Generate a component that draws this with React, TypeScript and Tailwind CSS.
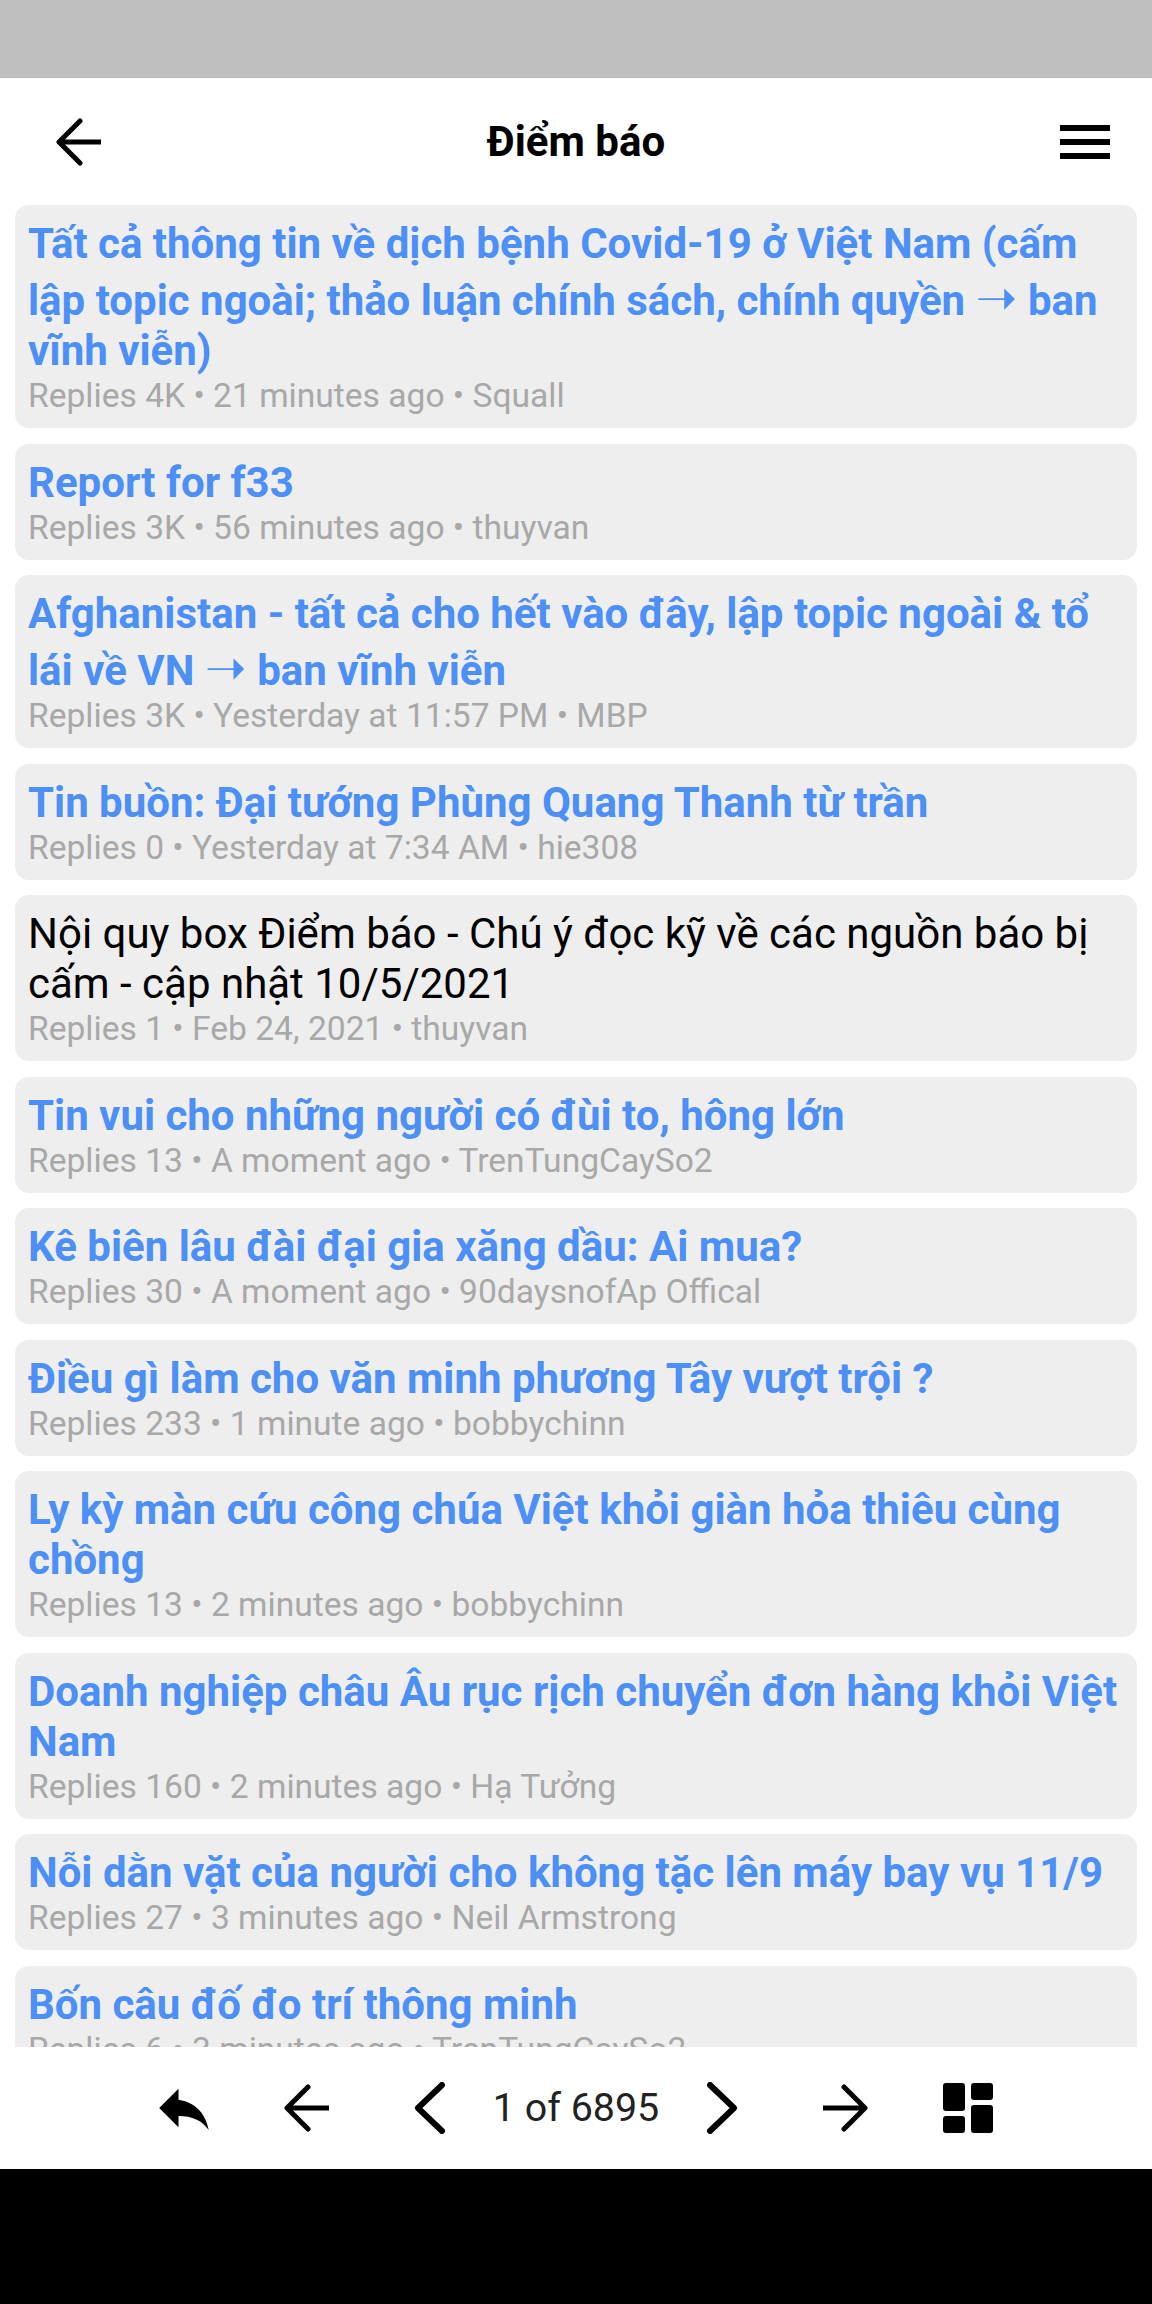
const threads = [
  { title: <>Tất cả thông tin về dịch bệnh Covid-19 ở Việt Nam (cấm lập topic ngoài; thảo luận chính sách, chính quyền <Arrow /> ban vĩnh viễn)</>, meta: "Replies 4K • 21 minutes ago • Squall", unread: true },
  { title: <>Report for f33</>, meta: "Replies 3K • 56 minutes ago • thuyvan", unread: true },
  { title: <>Afghanistan - tất cả cho hết vào đây, lập topic ngoài &amp; tổ lái về VN <Arrow /> ban vĩnh viễn</>, meta: "Replies 3K • Yesterday at 11:57 PM • MBP", unread: true },
  { title: <>Tin buồn: Đại tướng Phùng Quang Thanh từ trần</>, meta: "Replies 0 • Yesterday at 7:34 AM • hie308", unread: true },
  { title: <>Nội quy box Điểm báo - Chú ý đọc kỹ về các nguồn báo bị cấm - cập nhật 10/5/2021</>, meta: "Replies 1 • Feb 24, 2021 • thuyvan", unread: false },
  { title: <>Tin vui cho những người có đùi to, hông lớn</>, meta: "Replies 13 • A moment ago • TrenTungCaySo2", unread: true },
  { title: <>Kê biên lâu đài đại gia xăng dầu: Ai mua?</>, meta: "Replies 30 • A moment ago • 90daysnofAp Offical", unread: true },
  { title: <>Điều gì làm cho văn minh phương Tây vượt trội ?</>, meta: "Replies 233 • 1 minute ago • bobbychinn", unread: true },
  { title: <>Ly kỳ màn cứu công chúa Việt khỏi giàn hỏa thiêu cùng chồng</>, meta: "Replies 13 • 2 minutes ago • bobbychinn", unread: true },
  { title: <>Doanh nghiệp châu Âu rục rịch chuyển đơn hàng khỏi Việt Nam</>, meta: "Replies 160 • 2 minutes ago • Hạ Tưởng", unread: true },
  { title: <>Nỗi dằn vặt của người cho không tặc lên máy bay vụ 11/9</>, meta: "Replies 27 • 3 minutes ago • Neil Armstrong", unread: true },
  { title: <>Bốn câu đố đo trí thông minh</>, meta: "Replies 6 • 3 minutes ago • TrenTungCaySo2", unread: true },
];

function Arrow() {
  // the arrow glyph makes its line a bit taller, extra space goes above
  return (
    <>
      <span className="inline-block w-0 h-[46px]" />
      <span className="font-['DejaVu_Sans'] font-normal text-[50px] leading-[0]">➝</span>
    </>
  );
}

function ThinArrow({ flip = false }: { flip?: boolean }) {
  return (
    <svg width="48" height="48" viewBox="0 0 48 48" fill="none" stroke="#000" strokeWidth="5" className={flip ? "rotate-180" : ""}>
      <path d="M46 24H5" />
      <path d="M25 3 L4 24 L25 45" strokeLinecap="round" strokeLinejoin="round" />
    </svg>
  );
}

function Chevron({ flip = false }: { flip?: boolean }) {
  return (
    <svg width="34" height="52" viewBox="0 0 34 52" fill="none" stroke="#000" strokeWidth="6" strokeLinecap="round" strokeLinejoin="round" className={flip ? "rotate-180" : ""}>
      <path d="M29 3 L5 26 L29 49" />
    </svg>
  );
}

export default function App() {
  return (
    <div className="w-[1152px] h-[2304px] flex flex-col bg-white font-['Roboto',sans-serif]">
      <div className="h-[78px] shrink-0 bg-[#bebebe]" />
      <header className="h-[127px] shrink-0 flex items-center justify-between px-[42px]">
        <div className="w-[200px] pl-[13px]">
          <ThinArrow />
        </div>
        <h1 className="text-[42px] font-bold text-black">Điểm báo</h1>
        <div className="w-[200px] flex justify-end">
          <div className="w-[50px] flex flex-col gap-[8px]">
            <div className="h-[6px] bg-black" />
            <div className="h-[6px] bg-black" />
            <div className="h-[6px] bg-black" />
          </div>
        </div>
      </header>
      <main className="flex-1 min-h-0 overflow-hidden px-[15px] flex flex-col gap-[15.5px]">
        {threads.map((t, i) => (
          <div key={i} className="shrink-0 bg-[#eeeeee] rounded-[14px] px-[13px] pt-[14px] pb-[13px]">
            <div className={t.unread ? "text-[42px] leading-[50px] font-bold text-[#4b8ff7]" : "text-[42px] leading-[50px] text-black"}>
              {t.title}
            </div>
            <div className="text-[33.6px] leading-[39px] text-[#a8a8a8]">{t.meta}</div>
          </div>
        ))}
      </main>
      <footer className="h-[122px] shrink-0 bg-white flex items-center justify-center">
        <div className="w-[123px] flex justify-center">
          <svg width="66" height="66" viewBox="0 0 24 24" fill="#000">
            <path d="M10 9V5l-7 7 7 7v-4.1c5 0 8.5 1.6 11 5.1-1-5-4-10-11-11z" />
          </svg>
        </div>
        <div className="w-[123px] flex justify-center"><ThinArrow /></div>
        <div className="w-[123px] flex justify-center"><Chevron /></div>
        <div className="w-[169px] text-center text-[39.4px] text-[#222222]">1 of 6895</div>
        <div className="w-[123px] flex justify-center"><Chevron flip /></div>
        <div className="w-[123px] flex justify-center"><ThinArrow flip /></div>
        <div className="w-[123px] flex justify-center">
          <svg width="50" height="50" viewBox="0 0 50 50" fill="#000">
            <rect x="0" y="0" width="22" height="28" rx="3" />
            <rect x="0" y="33" width="22" height="17" rx="3" />
            <rect x="28" y="0" width="22" height="17" rx="3" />
            <rect x="28" y="22" width="22" height="28" rx="3" />
          </svg>
        </div>
      </footer>
      <div className="h-[135px] shrink-0 bg-black" />
    </div>
  );
}
